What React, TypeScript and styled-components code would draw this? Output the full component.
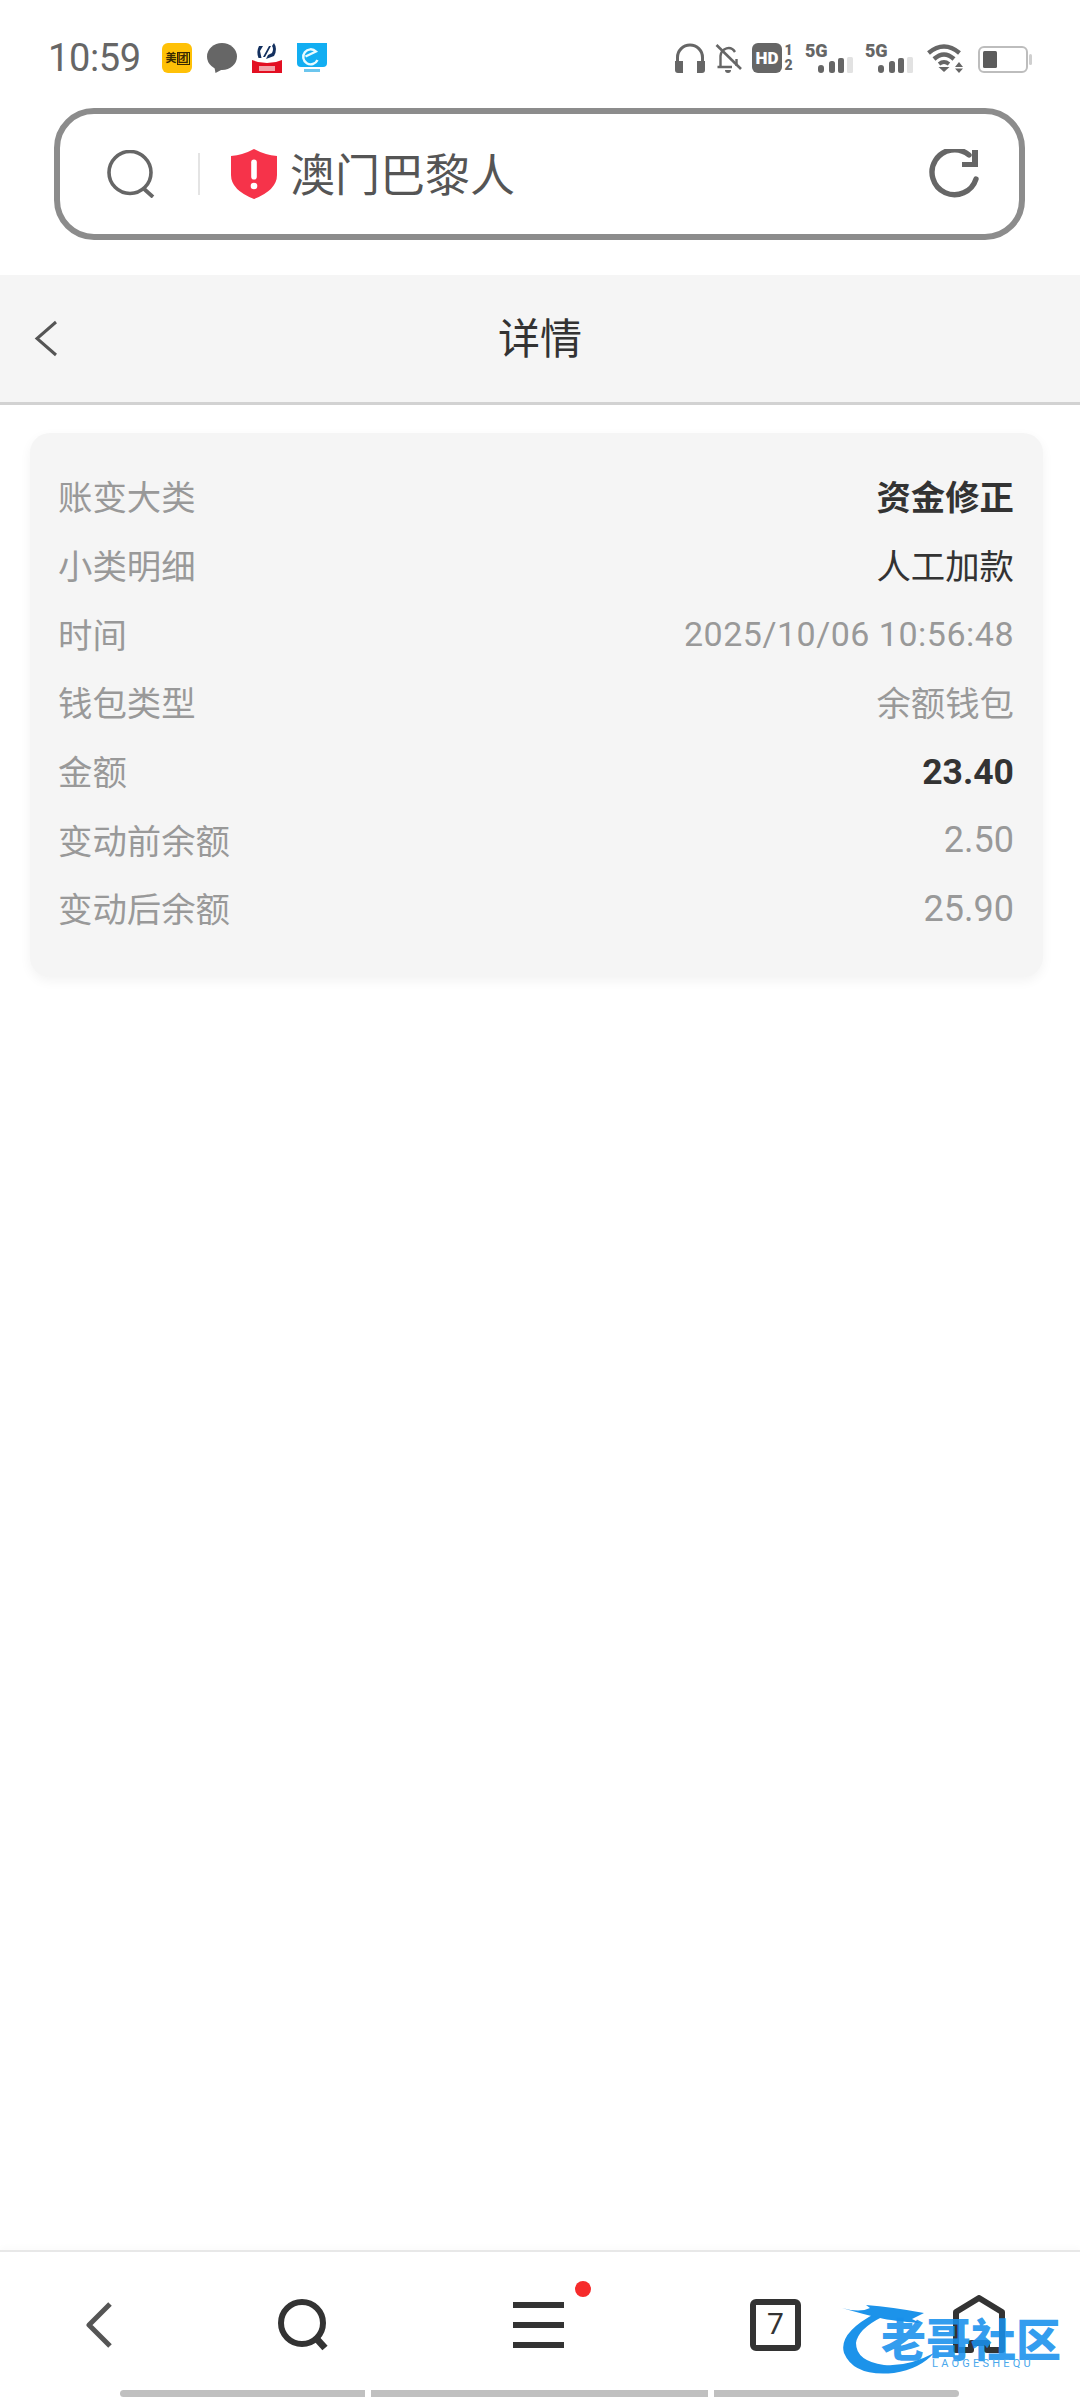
import React from 'react';
import styled, { createGlobalStyle } from 'styled-components';

const GlobalStyle = createGlobalStyle`
    html, body {
        margin: 0;
        padding: 0;
        background: #ffffff;
    }
`;

const cjk = `Roboto, "Noto Sans CJK SC", sans-serif`;

const Page = styled.div`
    position: relative;
    width: 1080px;
    height: 2400px;
    display: flex;
    flex-direction: column;
    overflow: hidden;
    background: #ffffff;
    font-family: ${cjk};
`;

const StatusBar = styled.div`
    box-sizing: border-box;
    height: 108px;
    padding: 8px 48px 0;
    display: flex;
    align-items: center;
    justify-content: space-between;
`;

const StatusGroup = styled.div`
    display: flex;
    align-items: center;
`;

const Clock = styled.span`
    width: 114px;
    font-size: 38px;
    line-height: 38px;
    color: #666666;
    letter-spacing: -0.4px;
`;

const AppIcons = styled.div`
    display: flex;
    gap: 15px;
`;

const AppTile = styled.div<{ $bg: string }>`
    width: 30px;
    height: 30px;
    border-radius: 6px;
    background: ${(props) => props.$bg};
    display: flex;
    align-items: center;
    justify-content: center;
    gap: 1px;
    overflow: hidden;
`;

const MeituanMark = styled.span<{ $boxed?: boolean }>`
    font-size: 11px;
    line-height: 11px;
    font-weight: 700;
    color: #3a2a00;
    white-space: nowrap;
    outline: ${(props) => (props.$boxed ? '1px solid #3a2a00' : 'none')};
`;

const Tray = styled.div`
    display: flex;
    align-items: flex-start;
    height: 30px;
`;

const TrayIcon = styled.svg<{ $gap?: number }>`
    display: block;
    flex: none;
    margin-left: ${(props) => props.$gap ?? 0}px;
`;

const HdBlock = styled.div`
    margin-left: 10px;
    width: 30px;
    height: 30px;
    border-radius: 6px;
    background: #666666;
    color: #ffffff;
    font-size: 17px;
    font-weight: 900;
    line-height: 30px;
    text-align: center;
`;

const SimSlots = styled.div`
    width: 11px;
    margin-left: 1px;
    display: flex;
    flex-direction: column;
    align-items: center;
    font-size: 14px;
    line-height: 15px;
    font-weight: 900;
    color: #666666;
`;

const Cellular = styled.div<{ $gap: number }>`
    position: relative;
    width: 48px;
    height: 30px;
    margin-left: ${(props) => props.$gap}px;
    flex: none;
`;

const FiveG = styled.span`
    position: absolute;
    left: 0;
    top: -2px;
    font-size: 18px;
    line-height: 20px;
    font-weight: 900;
    color: #666666;
    letter-spacing: -0.3px;
`;

const CellBars = styled.svg`
    position: absolute;
    left: 13px;
    top: 14px;
`;

const SearchRow = styled.div`
    box-sizing: border-box;
    height: 167px;
    padding-left: 54px;
`;

const SearchBar = styled.div`
    box-sizing: border-box;
    width: 971px;
    height: 132px;
    border: 6px solid #8c8c8c;
    border-radius: 40px;
    padding: 0 40px 0 47px;
    display: flex;
    align-items: center;
    background: #ffffff;
`;

const BarDivider = styled.div`
    width: 2px;
    height: 42px;
    margin: 0 31px 0 43px;
    background: #e4e4e4;
`;

const SiteName = styled.span`
    margin: 6px 0 0 13px;
    flex: 1;
    font-size: 45px;
    line-height: 50px;
    color: #555555;
`;

const NavBar = styled.div`
    box-sizing: border-box;
    position: relative;
    height: 130px;
    background: #f5f5f5;
    border-bottom: 3px solid #d2d2d2;
    display: flex;
    align-items: center;
    justify-content: center;
`;

const NavBack = styled.svg`
    position: absolute;
    left: 33px;
    top: 45px;
`;

const NavTitle = styled.h1`
    margin: 3px 0 0;
    font-size: 42px;
    line-height: 50px;
    font-weight: 400;
    color: #333333;
`;

const Content = styled.main`
    flex: 1;
    padding: 28px 37px 0 30px;
`;

const Card = styled.section`
    box-sizing: border-box;
    height: 544px;
    padding: 28px 29px 0 28px;
    border-radius: 20px;
    background: #f5f5f5;
    box-shadow: 0 4px 12px rgba(0, 0, 0, 0.05);
`;

const Row = styled.div`
    height: 68.7px;
    display: flex;
    align-items: center;
    justify-content: space-between;
    font-size: 34.4px;
`;

const Label = styled.span`
    color: #999999;
`;

const Value = styled.span<{ $tone: Tone; $size?: number; $spacing?: number }>`
    color: ${(props) => (props.$tone === 'muted' ? '#999999' : '#333333')};
    font-weight: ${(props) => (props.$tone === 'strong' ? 700 : 400)};
    font-size: ${(props) => props.$size ?? 34.4}px;
    letter-spacing: ${(props) => props.$spacing ?? 0}px;
    padding-top: ${(props) => (props.$size ? 3 : 0)}px;
`;

const Footer = styled.footer`
    box-sizing: border-box;
    position: relative;
    height: 150px;
    border-top: 2px solid #e8e8e8;
    box-shadow: 0 -3px 6px rgba(0, 0, 0, 0.02);
    padding: 47px 0 0 86px;
    display: flex;
    align-items: flex-start;
`;

const FooterButton = styled.div<{ $gap?: number; $top?: number }>`
    position: relative;
    flex: none;
    margin-left: ${(props) => props.$gap ?? 0}px;
    margin-top: ${(props) => props.$top ?? 0}px;
`;

const MenuDot = styled.span`
    position: absolute;
    left: 62px;
    top: -19px;
    width: 16px;
    height: 16px;
    border-radius: 50%;
    background: #f62b2b;
`;

const TabCount = styled.div`
    box-sizing: border-box;
    width: 51px;
    height: 52px;
    border: 6px solid #333333;
    border-radius: 6px;
    font-size: 30px;
    line-height: 38px;
    text-align: center;
    color: #333333;
`;

const HomeIndicator = styled.div`
    position: absolute;
    left: 120px;
    bottom: 3px;
    display: flex;
    gap: 6px;
`;

const IndicatorPiece = styled.span<{ $width: number; $side: 'left' | 'mid' | 'right' }>`
    width: ${(props) => props.$width}px;
    height: 7px;
    background: #c0c0c0;
    border-radius: ${(props) =>
        props.$side === 'left' ? '4px 0 0 4px' : props.$side === 'right' ? '0 4px 4px 0' : '0'};
`;

const Watermark = styled.div`
    position: absolute;
    left: 842px;
    top: 2305px;
    width: 222px;
    height: 70px;
    pointer-events: none;
`;

const WatermarkTitle = styled.span`
    position: absolute;
    left: 39px;
    top: 21px;
    font-size: 45px;
    line-height: 31px;
    font-weight: 900;
    color: rgba(24, 144, 236, 0.88);
    white-space: nowrap;
`;

const WatermarkSub = styled.span`
    position: absolute;
    left: 90px;
    top: 53px;
    font-size: 11px;
    line-height: 11px;
    letter-spacing: 3.2px;
    color: #4aa8ec;
    white-space: nowrap;
`;

type Tone = 'strong' | 'dark' | 'muted';

const rows: { label: string; value: string; tone: Tone; size?: number; spacing?: number }[] = [
    { label: '账变大类', value: '资金修正', tone: 'strong' },
    { label: '小类明细', value: '人工加款', tone: 'dark' },
    { label: '时间', value: '2025/10/06 10:56:48', tone: 'muted', size: 34, spacing: 0.5 },
    { label: '钱包类型', value: '余额钱包', tone: 'muted' },
    { label: '金额', value: '23.40', tone: 'strong', size: 35.5 },
    { label: '变动前余额', value: '2.50', tone: 'muted', size: 36 },
    { label: '变动后余额', value: '25.90', tone: 'muted', size: 36 },
];

const CellSignal = () => (
    <CellBars width="35" height="16" viewBox="0 0 35 16">
        <rect x="0" y="8" width="6" height="8" rx="3" fill="#666" />
        <rect x="11" y="4" width="6" height="12" rx="2.5" fill="#666" />
        <rect x="20" y="1" width="6" height="15" rx="2" fill="#666" />
        <rect x="29" y="0" width="6" height="16" rx="1.5" fill="#e2e2e2" />
    </CellBars>
);

export default function App() {
    return (
        <Page>
            <GlobalStyle />
            <StatusBar>
                <StatusGroup>
                    <Clock>10:59</Clock>
                    <AppIcons>
                        <AppTile $bg="#ffc107">
                            <MeituanMark>美</MeituanMark>
                            <MeituanMark $boxed>团</MeituanMark>
                        </AppTile>
                        <svg width="30" height="30" viewBox="0 0 30 30">
                            <ellipse cx="15" cy="13.5" rx="15" ry="13.5" fill="#666" />
                            <path d="M7 22 L8.5 30 L16 26 Z" fill="#666" />
                        </svg>
                        <svg width="30" height="30" viewBox="0 0 30 30">
                            <path d="M7 3 H11 L8 8 L9.5 15 H6.5 Q4 9 7 3 Z M22 0 Q26 6 22 13 L14 16 L16 12 L20 10 Q22 6 20 3 Z M17 3 L19 3 L13 14 L11 14 Z" fill="#13305f" />
                            <path d="M0 17 L6 19 L15 20 L24 19 L30 17 V30 H0 Z" fill="#e30f22" />
                            <rect x="7" y="23" width="16" height="5" fill="#f2a3a9" />
                        </svg>
                        <svg width="30" height="30" viewBox="0 0 30 30">
                            <path d="M0 0 H30 V20 Q30 24 26 24 H4 Q0 24 0 20 Z" fill="#12aef2" />
                            <path d="M8.5 13.5 L19 8.5 A7.5 7.5 0 1 0 20.5 17" fill="none" stroke="#e8fbff" strokeWidth="2.4" />
                            <rect x="7" y="26" width="16" height="3" fill="#6cc6ee" />
                        </svg>
                    </AppIcons>
                </StatusGroup>
                <Tray>
                    <TrayIcon width="30" height="30" viewBox="0 0 30 30">
                        <path d="M2.5 19 V14.5 A12.5 12.5 0 0 1 27.5 14.5 V19" fill="none" stroke="#666" strokeWidth="3" />
                        <path d="M0 18 H8 V30 H3 Q0 30 0 27 Z M30 18 H22 V30 H27 Q30 30 30 27 Z" fill="#666" />
                    </TrayIcon>
                    <TrayIcon $gap={10} width="27" height="30" viewBox="0 0 27 30">
                        <path d="M5.5 23 V13 A8 9 0 0 1 20 9 M21.5 16 V23 M2.5 24 H17" fill="none" stroke="#666" strokeWidth="2.4" />
                        <path d="M10 27 H16 A3 3 0 0 1 10 27 Z" fill="#666" />
                        <path d="M1.5 2 L26 26" stroke="#666" strokeWidth="2.6" />
                    </TrayIcon>
                    <HdBlock>HD</HdBlock>
                    <SimSlots>
                        <span>1</span>
                        <span>2</span>
                    </SimSlots>
                    <Cellular $gap={11}>
                        <FiveG>5G</FiveG>
                        <CellSignal />
                    </Cellular>
                    <Cellular $gap={12}>
                        <FiveG>5G</FiveG>
                        <CellSignal />
                    </Cellular>
                    <TrayIcon $gap={14} width="36" height="30" viewBox="0 0 36 30">
                        <path d="M1.5 10 Q17 -3 32.5 10" fill="none" stroke="#666" strokeWidth="4.4" />
                        <path d="M7 16 Q17 7 27 16" fill="none" stroke="#666" strokeWidth="4.4" />
                        <path d="M12 21 Q17 17 22 21" fill="none" stroke="#666" strokeWidth="3.8" />
                        <path d="M11.5 24 H22.5 L17 29 Z" fill="#666" />
                        <path d="M32 19 L36 24 H28 Z M28 25.5 H36 L32 30 Z" fill="#666" />
                    </TrayIcon>
                    <TrayIcon $gap={15} width="54" height="30" viewBox="0 0 54 30">
                        <rect x="1" y="4" width="48" height="25" rx="5" fill="none" stroke="#bdbdbd" strokeWidth="2" />
                        <rect x="5" y="8" width="14" height="17" rx="1.5" fill="#5c5c5c" />
                        <rect x="51" y="11" width="3" height="11" rx="1.5" fill="#cfcfcf" />
                    </TrayIcon>
                </Tray>
            </StatusBar>
            <SearchRow>
                <SearchBar>
                    <svg width="48" height="48" viewBox="0 0 48 48">
                        <circle cx="23" cy="22.5" r="21" fill="none" stroke="#666" strokeWidth="3.6" />
                        <path d="M36 38 L46 47" stroke="#666" strokeWidth="3.8" />
                    </svg>
                    <BarDivider />
                    <svg width="46" height="50" viewBox="0 0 46 50">
                        <path d="M23 0 Q34 6 46 7 V26 Q46 41 23 50 Q0 41 0 26 V7 Q12 6 23 0 Z" fill="#f6334a" />
                        <rect x="20.2" y="10.5" width="5.6" height="20" rx="2.8" fill="#fff" />
                        <circle cx="23" cy="37" r="3.3" fill="#fff" />
                    </svg>
                    <SiteName>澳门巴黎人</SiteName>
                    <svg width="50" height="50" viewBox="0 0 50 50">
                        <path d="M47 30 A22.5 22.5 0 1 1 40 6" fill="none" stroke="#666" strokeWidth="5.4" strokeLinecap="round" />
                        <path d="M43 1 H49 V18 H33 V13 H43 Z" fill="#666" />
                    </svg>
                </SearchBar>
            </SearchRow>
            <NavBar>
                <NavBack width="26" height="37" viewBox="0 0 26 37">
                    <path d="M23 2 L4 18.5 L23 35" fill="none" stroke="#555" strokeWidth="3" />
                </NavBack>
                <NavTitle>详情</NavTitle>
            </NavBar>
            <Content>
                <Card>
                    {rows.map((row) => (
                        <Row key={row.label}>
                            <Label>{row.label}</Label>
                            <Value $tone={row.tone} $size={row.size} $spacing={row.spacing}>
                                {row.value}
                            </Value>
                        </Row>
                    ))}
                </Card>
            </Content>
            <Footer>
                <FooterButton $top={2}>
                    <svg width="26" height="48" viewBox="0 0 26 48">
                        <path d="M24 3 L3 24 L24 45" fill="none" stroke="#555" strokeWidth="5" strokeLinejoin="round" />
                    </svg>
                </FooterButton>
                <FooterButton $gap={166}>
                    <svg width="50" height="52" viewBox="0 0 50 52">
                        <circle cx="24" cy="24" r="21" fill="none" stroke="#333" strokeWidth="6" />
                        <path d="M37 38 L47 49" stroke="#333" strokeWidth="7" />
                    </svg>
                </FooterButton>
                <FooterButton $gap={185} $top={1}>
                    <svg width="51" height="48" viewBox="0 0 51 48">
                        <rect x="0" y="2" width="51" height="6" fill="#333" />
                        <rect x="0" y="22" width="51" height="6" fill="#333" />
                        <rect x="0" y="42" width="51" height="6" fill="#333" />
                    </svg>
                    <MenuDot />
                </FooterButton>
                <FooterButton $gap={186}>
                    <TabCount>7</TabCount>
                </FooterButton>
                <FooterButton $gap={152} $top={-4}>
                    <svg width="52" height="58" viewBox="0 0 52 58">
                        <path d="M3 55 V17 L26 3 L49 17 V55 H34 V48 H18 V55 Z" fill="none" stroke="#333" strokeWidth="6" strokeLinejoin="round" />
                    </svg>
                </FooterButton>
                <HomeIndicator>
                    <IndicatorPiece $width={245} $side="left" />
                    <IndicatorPiece $width={337} $side="mid" />
                    <IndicatorPiece $width={245} $side="right" />
                </HomeIndicator>
            </Footer>
            <Watermark>
                <svg width="110" height="70" viewBox="0 0 110 70">
                    <path d="M34 8 Q-4 28 2 48 Q12 72 52 68 Q78 64 92 48 Q66 62 42 60 Q14 56 14 38 Q16 24 40 12 Z" fill="#1c93ea" />
                    <path d="M0 3 Q18 8 28 3 L24 0 Q50 2 82 8 L70 14 L78 18 Q50 16 38 13 Q24 10 0 3 Z" fill="#1c93ea" />
                </svg>
                <WatermarkTitle>老哥社区</WatermarkTitle>
                <WatermarkSub>LAOGESHEQU</WatermarkSub>
            </Watermark>
        </Page>
    );
}
